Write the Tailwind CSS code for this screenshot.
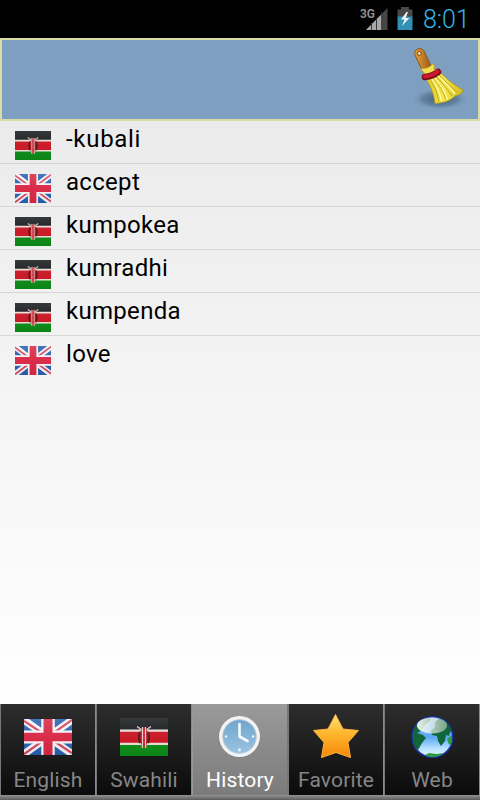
<!DOCTYPE html>
<html lang="en">
<head>
<meta charset="utf-8">
<title>History</title>
<script src="https://cdn.jsdelivr.net/npm/@tailwindcss/browser@4"></script>
</head>
<body class="w-[480px] h-[800px] overflow-hidden bg-black font-[Roboto,sans-serif]">
<svg width="0" height="0" class="absolute">
  <defs>
    <linearGradient id="gloss" x1="0" y1="0" x2="0" y2="1"><stop offset="0" stop-color="#fff" stop-opacity=".14"/><stop offset=".5" stop-color="#fff" stop-opacity=".03"/><stop offset="1" stop-color="#000" stop-opacity=".05"/></linearGradient>
    <symbol id="kenya" viewBox="0 0 48 38" preserveAspectRatio="none">
      <path fill="#16191b" d="M0 0h48v12H0z"/><path fill="#e9ddd6" d="M0 11.500h48v15.500H0z"/><path fill="#c91522" d="M0 13.800h48v11H0z"/><path fill="#0c8a17" d="M0 27h48V38H0z"/>
      <path d="M17 8.500l3.500 2.500 2 18M31 8.500l-3.500 2.500-2 18" fill="none" stroke="#d9b9b0" stroke-width="1.500"/>
      <path d="M24 9c6 5 6 15 0 21c-6-6-6-16 0-21z" fill="#b3101f"/>
      <path d="M20 14q-2.500 5.500 0 11M28 14q2.500 5.500 0 11" fill="none" stroke="#5a1016" stroke-width="2"/>
      <path d="M22.500 9v21M25.500 9v21" stroke="#efd0c8" stroke-width="1.200"/>
      <path d="M24 12v4M24 18v3M24 23v3" stroke="#d8303c" stroke-width="1.500"/>
      <path fill="url(#gloss)" d="M0 0h48v38H0z"/>
    </symbol>
    <symbol id="uk" viewBox="0 0 48 38" preserveAspectRatio="none">
      <path fill="#2860ad" d="M0 0h48v38H0z"/>
      <path d="M0 1l48 36M48 1L0 37" stroke="#f5f3f7" stroke-width="7.500"/>
      <path d="M0 2l17 12M48 1L31 13.500M0 37l17-12.500M48 36L31 24" stroke="#d7455b" stroke-width="2.300"/>
      <path d="M24 0v38M0 19h48" stroke="#f5f3f7" stroke-width="13.500"/>
      <path d="M24 0v38M0 19h48" stroke="#d82743" stroke-width="9"/>
      <path fill="url(#gloss)" d="M0 0h48v38H0z"/>
    </symbol>
  </defs>
</svg>
<div class="flex h-[800px] flex-col">
  <header class="flex h-[38px] shrink-0 items-start bg-black pl-[360px]">
    <svg class="h-[38px] w-[60px] shrink-0" viewBox="0 0 60 38">
      <path d="M6 30L20 16V9.500L27.500 7v23z" fill="none"/>
      <path d="M6 30L27.500 8v22z" fill="#464646"/>
      <path d="M6 30L21.500 14.200V30z" fill="#a8a8a8"/>
      <path d="M11.500 23v7M16.500 18v12M21.800 12v18" stroke="#383838" stroke-width="1"/>
      <text x="0" y="17.500" font-family="Roboto" font-weight="700" font-size="13" fill="#8c8c8c" textLength="15" lengthAdjust="spacingAndGlyphs">3G</text>
      <path d="M37.500 9.500H41V7h8v2.500h3.500V17h-15z" fill="#484848"/><path d="M37.500 16.500h15V30h-15z" fill="#2f91b3"/>
      <path d="M46.500 12l-5.500 7.500h3.500L42 26l7.500-8h-3.800l2.300-6z" fill="#f2f2f2"/>
    </svg>
    <span class="ml-[3px] mt-[4px] whitespace-nowrap text-[25px] font-light leading-[32px] text-[#33b5e5]">8:01</span>
  </header>
  <section class="flex h-[83px] shrink-0 justify-end border-2 border-[#d9dca6] bg-[#7e9fbf] pr-[6px]">
    <svg class="h-[72px] w-[64px]" viewBox="408 40 64 72">
      <defs>
        <radialGradient id="shade"><stop offset="0" stop-color="#30475f" stop-opacity=".75"/><stop offset=".6" stop-color="#415d7b" stop-opacity=".45"/><stop offset="1" stop-color="#7e9fbf" stop-opacity="0"/></radialGradient>
        <linearGradient id="straw"><stop stop-color="#e0c727"/><stop offset=".5" stop-color="#f5e850"/><stop offset="1" stop-color="#d5b91f"/></linearGradient>
        <linearGradient id="wood"><stop stop-color="#e5a03a"/><stop offset="1" stop-color="#9a5c18"/></linearGradient>
      </defs>
      <ellipse cx="440" cy="99" rx="29" ry="11" fill="url(#shade)"/>
      <path d="M415 55c-2-7 8-9 10-2l6 13-9 4z" fill="url(#wood)" stroke="#925216"/>
      <circle cx="419.300" cy="53.500" r="1.900" fill="#f5e8bd" stroke="#75420f"/>
      <path d="M420.500 68.500q8 .5 12-4.500l2 1-.5 4 3 3-12 6-1-5z" fill="#f1df56" stroke="#b8981a" stroke-width=".8"/>
      <path d="M426 79l14-7c7 8 15 13 23 18c-1 4-4 5-8 6c-5 5-12 7-20 7.500c-1-9-4-17-9-24.500z" fill="url(#straw)" stroke="#ad9717" stroke-width=".8"/>
      <path d="M430 78q7 11 9 24M433 77q10 12 13 23M436 76q10 11 16 20M438 74q11 11 20 19" fill="none" stroke="#bda720" stroke-width="1"/>
      <path d="M431.500 79q8 11 10 22M434.500 78q10 11 13 22M437 75q12 11 18 19" fill="none" stroke="#fffa9f" stroke-width="1.400"/>
      <path d="M425 77q8-1 13-5" fill="none" stroke="#79101c" stroke-width="6.500" stroke-linecap="round"/>
      <path d="M425 76.500q8-1 12.500-5" fill="none" stroke="#cf1a2e" stroke-width="4" stroke-linecap="round"/>
    </svg>
  </section>
  <main class="h-[583px] shrink-0 bg-linear-to-b from-[#ebebeb] to-white text-[24px] leading-[28px] text-black">
    <div class="flex h-[43px] border-b border-[#d6d6d6] pl-[15px]"><svg class="mt-[10px] h-[29px] w-[36px]"><use href="#kenya"/></svg><span class="ml-[15px] mt-[4px] tracking-[0.7px]">-kubali</span></div>
    <div class="flex h-[43px] border-b border-[#d6d6d6] pl-[15px]"><svg class="mt-[10px] h-[29px] w-[36px]"><use href="#uk"/></svg><span class="ml-[15px] mt-[4px] tracking-[0.3px]">accept</span></div>
    <div class="flex h-[43px] border-b border-[#d6d6d6] pl-[15px]"><svg class="mt-[10px] h-[29px] w-[36px]"><use href="#kenya"/></svg><span class="ml-[15px] mt-[4px] tracking-[0.3px]">kumpokea</span></div>
    <div class="flex h-[43px] border-b border-[#d6d6d6] pl-[15px]"><svg class="mt-[10px] h-[29px] w-[36px]"><use href="#kenya"/></svg><span class="ml-[15px] mt-[4px] tracking-[0.3px]">kumradhi</span></div>
    <div class="flex h-[43px] border-b border-[#d6d6d6] pl-[15px]"><svg class="mt-[10px] h-[29px] w-[36px]"><use href="#kenya"/></svg><span class="ml-[15px] mt-[4px] tracking-[0.3px]">kumpenda</span></div>
    <div class="flex h-[43px] pl-[15px]"><svg class="mt-[10px] h-[29px] w-[36px]"><use href="#uk"/></svg><span class="ml-[15px] mt-[4px] tracking-[0.3px]">love</span></div>
  </main>
  <nav class="flex h-[96px] shrink-0 flex-col bg-[#777]">
    <div class="grid h-[91px] grid-cols-5 text-center text-[21px] leading-[25px] text-[#868686]">
      <div class="flex flex-col items-center border-x border-l-[#777] border-r-[#8a8a8a] bg-linear-to-b from-[#2d2d2d] via-[#1d1d1d] to-[#0b0b0b]"><svg class="mt-[15px] h-[36px] w-[48px] shrink-0"><use href="#uk"/></svg><span class="mt-[13px] tracking-[0.15px]">English</span></div>
      <div class="flex flex-col items-center border-x border-l-[#777] border-r-[#8a8a8a] bg-linear-to-b from-[#2d2d2d] via-[#1d1d1d] to-[#0b0b0b]"><svg class="mt-[14px] h-[38px] w-[48px] shrink-0"><use href="#kenya"/></svg><span class="mt-[12px] tracking-[0.15px]">Swahili</span></div>
      <div class="flex flex-col items-center border-x border-l-[#999] border-r-[#777] bg-linear-to-b from-[#9a9a9a] to-[#7b7b7b] text-white">
        <svg class="mt-[8px] h-[48px] w-[48px] shrink-0" viewBox="0 0 48 48"><defs><linearGradient id="dial" x1="0" y1="0" x2="0" y2="1"><stop stop-color="#6fa5cd"/><stop offset="1" stop-color="#9bc4e2"/></linearGradient></defs><circle cx="23.500" cy="25" r="21" fill="#777" opacity=".35"/><circle cx="23.500" cy="24.500" r="20.500" fill="#f3f3f3"/><circle cx="23.500" cy="24.500" r="16.800" fill="url(#dial)" stroke="#bdcbd5"/><path d="M23.500 12v12.500l8 4.500" fill="none" stroke="#f4f9fc" stroke-width="2.600" stroke-linecap="round" stroke-linejoin="round"/><g fill="#e8f6ff"><circle cx="10" cy="24.500" r="1.200"/><circle cx="37" cy="24.500" r="1.200"/><circle cx="23.500" cy="38" r="1.400"/></g></svg><span class="mt-[8px] tracking-[0.15px]">History</span></div>
      <div class="flex flex-col items-center border-x border-l-[#777] border-r-[#8a8a8a] bg-linear-to-b from-[#2d2d2d] via-[#1d1d1d] to-[#0b0b0b]">
        <svg class="mt-[8px] h-[48px] w-[48px] shrink-0" viewBox="0 0 48 48"><defs><linearGradient id="gold" x1="0" y1="0" x2="0" y2="1"><stop stop-color="#ffe17a"/><stop offset=".45" stop-color="#ffb52c"/><stop offset="1" stop-color="#f7860c"/></linearGradient></defs><path d="M23.500 2.500l7.500 14.500 15.500 1.500-10.500 12 2.500 15L24 40.500 9.500 45.500 12 30.500 1.500 18.500l14.500-1.500z" fill="url(#gold)" stroke="#ffb23b" stroke-width="1" stroke-linejoin="round"/></svg><span class="mt-[8px] tracking-[0.15px]">Favorite</span></div>
      <div class="flex flex-col items-center border-x border-l-[#777] border-r-[#8a8a8a] bg-linear-to-b from-[#2d2d2d] via-[#1d1d1d] to-[#0b0b0b]">
        <svg class="mt-[9px] h-[48px] w-[48px] shrink-0" viewBox="0 0 48 48"><defs><linearGradient id="sea" x1="0" y1="0" x2="0" y2="1"><stop stop-color="#8fbdf0"/><stop offset=".5" stop-color="#5aa8f5"/><stop offset=".78" stop-color="#b5e0ff"/><stop offset="1" stop-color="#f0fcff"/></linearGradient><clipPath id="ball"><circle cx="24.500" cy="24" r="20"/></clipPath><linearGradient id="shine" x1="0" y1="0" x2="1" y2="0"><stop stop-color="#fff" stop-opacity=".9"/><stop offset="1" stop-color="#dde8d8" stop-opacity=".5"/></linearGradient></defs>
        <circle cx="24.500" cy="24" r="20.300" fill="url(#sea)" stroke="#1730a8" stroke-width="1.500"/><g clip-path="url(#ball)" fill="#12663b"><path d="M4 16l6-8 9-4 4 3-6 5-4 6-4 2 6 2 3 3-4 5-4 7-3-2-3-8z"/><path d="M27 9l6-5 8 7 5 9-4-1-1 4-3-1-1 6-4 5-3-5-1-5-5-1-1-4 4-4z"/><path d="M39 26l5-4v8l-3 2zM17 42l4-2 8 1 6-1-5 5H21z" fill="#2e9b43"/></g><ellipse cx="24" cy="12.500" rx="15" ry="8" fill="url(#shine)"/></svg><span class="mt-[7px] tracking-[0.15px]">Web</span></div>
    </div>
    <div class="h-[5px] bg-linear-to-b from-[#939393] to-[#5c5c5c]"></div>
  </nav>
</div>
</body>
</html>
